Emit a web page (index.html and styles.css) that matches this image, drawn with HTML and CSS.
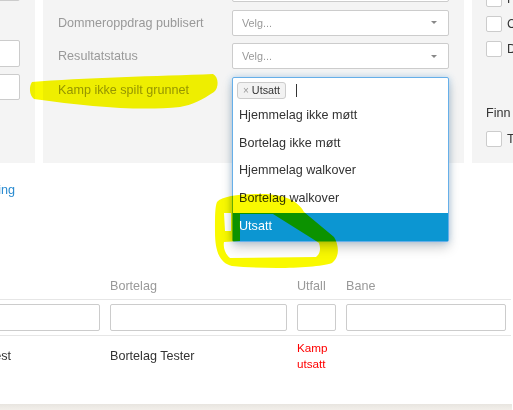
FILE: index.html
```html
<!DOCTYPE html>
<html lang="no">
<head>
<meta charset="utf-8">
<title>Kamper</title>
<link rel="stylesheet" href="styles.css">
</head>
<body>
<div class="viewport">
  <div class="page">
    <div class="filters">
      <div class="panel panel-left">
        <div class="inp"></div>
        <div class="inp inp-b"></div>
        <div class="inp inp-c"></div>
      </div>
      <div class="panel panel-mid">
        <div class="flabel">Kampstatus</div>
        <div class="select"><span class="ph">Velg...</span><span class="caret"></span></div>
        <div class="flabel">Dommeroppdrag publisert</div>
        <div class="select"><span class="ph">Velg...</span><span class="caret"></span></div>
        <div class="flabel">Resultatstatus</div>
        <div class="select"><span class="ph">Velg...</span><span class="caret"></span></div>
        <div class="flabel">Kamp ikke spilt grunnet</div>
        <div class="multi">
          <div class="multi-box">
            <div class="multi-input">
              <span class="tag"><span class="tag-x">×</span>Utsatt</span>
              <span class="text-caret"></span>
            </div>
            <ul class="options">
              <li>Hjemmelag ikke møtt</li>
              <li>Bortelag ikke møtt</li>
              <li>Hjemmelag walkover</li>
              <li>Bortelag walkover</li>
              <li class="active">Utsatt</li>
            </ul>
          </div>
        </div>
      </div>
      <div class="panel panel-right">
        <div class="checks">
          <label class="chk"><span class="box"></span>Fra dato</label>
          <label class="chk"><span class="box"></span>Cup</label>
          <label class="chk"><span class="box"></span>Dommer</label>
        </div>
        <div class="finn">Finn</div>
        <label class="chk chk-last"><span class="box"></span>Tidligere</label>
      </div>
    </div>

    <div class="linkrow"><a class="link" href="#">Nullstill filtrering</a></div>

    <div class="table">
      <div class="tr th">
        <div>Hjemmelag</div>
        <div>Bortelag</div>
        <div>Utfall</div>
        <div>Bane</div>
      </div>
      <div class="tr filt">
        <div><div class="cell-inp"></div></div>
        <div><div class="cell-inp"></div></div>
        <div><div class="cell-inp"></div></div>
        <div><div class="cell-inp"></div></div>
      </div>
      <div class="tr row">
        <div class="first">Hjemmelag Test</div>
        <div>Bortelag Tester</div>
        <div class="red">Kamp<br>utsatt</div>
        <div></div>
      </div>
    </div>
    <div class="page-end"></div>
  </div>

  <svg class="annot" width="513" height="410" viewBox="0 0 513 410">
    <path d="M32,82 C80,78 160,76 213,74 C219,77 219,88 214,92 C202,100 192,105 180,107 C140,111 90,107 34,99 C29,95 29,86 32,82 Z"/>
    <path fill-rule="evenodd" d="M217,202 C222,196 240,194 262,194 C282,194 298,200 304,212 L334,237 C339,245 340,257 332,263 C315,269 262,269 232,266 C219,263 215,250 215,232 C215,215 215,207 217,202 Z M240,214 L273,214 L316,241 L319,243 C321,249 320,254 316,257 L230,258 C225,254 223,247 224,242 L240,241 Z M224,213 L231,213 L231,231 L225,231 Z"/>
  </svg>
</div>
</body>
</html>
```

FILE: styles.css
```css
* { box-sizing: border-box; }

html, body {
  margin: 0;
  padding: 0;
  background: #fff;
}

body {
  font-family: "Liberation Sans", Arial, sans-serif;
  font-size: 12.6px;
  color: #333;
}

.viewport {
  position: relative;
  width: 513px;
  height: 410px;
  overflow: hidden;
}

.page {
  margin: -40px 0 0 -86px;
  width: 760px;
}

/* ---------- filter panels ---------- */
.filters {
  display: flex;
  gap: 8px;
  align-items: stretch;
}

.panel {
  background: #f4f4f4;
}

.panel-left {
  width: 121px;
  padding: 14px 15px 0 0;
}

.inp {
  height: 27px;
  background: #fff;
  border: 1px solid #ccc;
  border-radius: 2px;
}

.inp-b { margin-top: 39px; }
.inp-c { margin-top: 7px; height: 26px; }

.panel-mid {
  width: 421px;
  padding: 16px 15px 0 15px;
  display: grid;
  grid-template-columns: 174px 217px;
  grid-auto-rows: 26px;
  row-gap: 7.6px;
  align-items: center;
  align-content: start;
}

.flabel {
  color: #999;
  line-height: 18px;
  white-space: nowrap;
}

.select {
  height: 26px;
  background: #fff;
  border: 1px solid #ccc;
  border-radius: 2px;
  display: flex;
  align-items: center;
  justify-content: space-between;
  padding: 0 11px 0 9px;
  font-size: 10.8px;
  color: #999;
}

.caret {
  width: 0;
  height: 0;
  border-left: 3px solid transparent;
  border-right: 3px solid transparent;
  border-top: 3px solid #888;
}

.multi {
  position: relative;
  height: 26px;
}

.multi-box {
  position: absolute;
  top: 0;
  left: 0;
  right: 0;
  z-index: 5;
  background: #fff;
  border: 1px solid #66afe9;
  border-radius: 2px;
  box-shadow: 0 6px 12px rgba(0, 0, 0, 0.175), 0 0 6px rgba(102, 175, 233, 0.45);
}

.multi-input {
  height: 24px;
  padding: 4px 4px 0 4px;
  display: flex;
  align-items: flex-start;
}

.tag {
  display: inline-flex;
  align-items: center;
  height: 17px;
  padding: 0 5px;
  border: 1px solid #ccc;
  border-radius: 3px;
  background: #f2f2f2;
  font-size: 10.8px;
  color: #333;
}

.tag-x {
  color: #999;
  font-size: 10px;
  margin-right: 3px;
}

.text-caret {
  width: 1px;
  height: 13px;
  background: #333;
  margin: 2px 0 0 10px;
}

.options {
  list-style: none;
  margin: 0;
  padding: 0;
}

.options li {
  padding: 5px 6px;
  line-height: 17.8px;
  color: #333;
  white-space: nowrap;
}

.options li.active {
  background: #0c96d2;
  color: #fff;
}

.panel-right {
  width: 200px;
  padding: 31.4px 0 16px 14px;
}

.checks {
  display: flex;
  flex-direction: column;
  gap: 8.8px;
}

.chk {
  display: flex;
  align-items: center;
  gap: 5px;
  height: 16px;
  line-height: 16px;
  white-space: nowrap;
  color: #333;
}

.box {
  flex: none;
  width: 16px;
  height: 16px;
  background: #fff;
  border: 1px solid #ccc;
  border-radius: 2px;
}

.finn {
  margin-top: 47px;
  line-height: 18px;
}

.chk-last { margin-top: 9px; }

/* ---------- link ---------- */
.linkrow {
  margin-top: 18px;
  width: 101px;
  text-align: right;
  line-height: 18px;
  white-space: nowrap;
}

.link {
  color: #2a8bd0;
  text-decoration: none;
}

/* ---------- table ---------- */
.table {
  margin-top: 74px;
  width: 597px;
}

.tr {
  display: grid;
  grid-template-columns: 191px 187px 49px 170px;
  border-bottom: 1px solid #e6e6e6;
}

.tr > div {
  padding: 4px 5px;
  white-space: nowrap;
}

.th > div {
  color: #999;
  line-height: 18px;
}

.cell-inp {
  height: 27px;
  background: #fff;
  border: 1px solid #ccc;
  border-radius: 2px;
}

.row {
  border-bottom: none;
  align-items: center;
}

.row > div { line-height: 16.5px; }

.row > .first { padding-left: 7px; }

.row .red {
  color: #f00;
  font-size: 11.7px;
}

.page-end {
  margin-top: 27px;
  width: 598px;
  height: 6px;
  background: linear-gradient(#e8e5e0, #f2efea);
}

/* ---------- marker annotations ---------- */
.annot {
  position: absolute;
  top: 0;
  left: 0;
  z-index: 10;
  pointer-events: none;
  mix-blend-mode: multiply;
  fill: #f9f900;
}
```
